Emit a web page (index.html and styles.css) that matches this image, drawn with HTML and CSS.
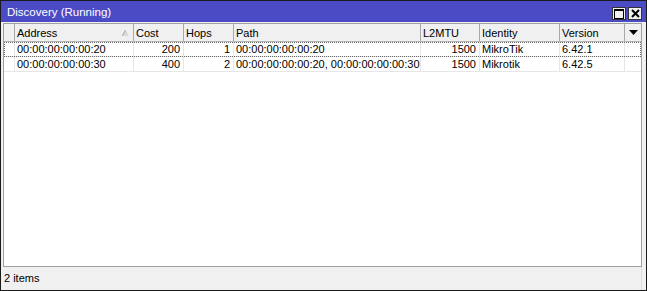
FILE: index.html
```html
<!DOCTYPE html>
<html>
<head>
<meta charset="utf-8">
<link rel="stylesheet" href="styles.css">
</head>
<body>
<div class="window">
  <div class="titlebar">
    <span class="title">Discovery (Running)</span>
    <div class="tbtns">
      <div class="tbtn"><svg width="10" height="10" viewBox="0 0 10 10"><rect x="0.5" y="0.5" width="9" height="9" fill="none" stroke="#000"/><rect x="0" y="0" width="10" height="2" fill="#000"/></svg></div>
      <div class="tbtn"><svg width="9" height="9" viewBox="0 0 9 9"><path d="M1 1 L8 8 M8 1 L1 8" stroke="#000" stroke-width="2"/></svg></div>
    </div>
  </div>
  <div class="content">
    <div class="list">
      <div class="row head">
        <div class="c"></div>
        <div class="c">Address<svg class="sort" width="7" height="6" viewBox="0 0 7 6"><path d="M3.5 0 L7 6 L0 6 Z" fill="#d8d8d8"/><path d="M3.5 0 L0 6" stroke="#a8a8a8" stroke-width="1"/></svg></div>
        <div class="c">Cost</div>
        <div class="c">Hops</div>
        <div class="c">Path</div>
        <div class="c">L2MTU</div>
        <div class="c">Identity</div>
        <div class="c">Version</div>
        <div class="c dd"><svg width="9" height="5" viewBox="0 0 9 5"><path d="M0 0 L9 0 L4.5 5 Z" fill="#000"/></svg></div>
      </div>
      <div class="row data focus">
        <div class="c"></div>
        <div class="c">00:00:00:00:00:20</div>
        <div class="c r">200</div>
        <div class="c r">1</div>
        <div class="c">00:00:00:00:00:20</div>
        <div class="c r">1500</div>
        <div class="c">MikroTik</div>
        <div class="c">6.42.1</div>
        <div class="c"></div>
      </div>
      <div class="row data">
        <div class="c"></div>
        <div class="c">00:00:00:00:00:30</div>
        <div class="c r">400</div>
        <div class="c r">2</div>
        <div class="c">00:00:00:00:00:20, 00:00:00:00:00:30</div>
        <div class="c r">1500</div>
        <div class="c">Mikrotik</div>
        <div class="c">6.42.5</div>
        <div class="c"></div>
      </div>
    </div>
  </div>
  <div class="status">2 items</div>
</div>
</body>
</html>
```
FILE: styles.css
```css
* { box-sizing: border-box; }
html, body { margin: 0; padding: 0; background: #fff; }
body { font-family: "Liberation Sans", Arial, sans-serif; font-size: 11px; color: #000; }
.window {
  width: 647px; height: 291px;
  border: 1px solid #1a1a1a;
  background: #f0f0f0;
  display: flex; flex-direction: column;
}
.titlebar {
  height: 21px; background: #4b4bc6; color: #fff;
  display: flex; align-items: center;
  padding: 0 4px 0 6px;
}
.title { font-size: 11.5px; }
.tbtns { margin-left: auto; display: flex; gap: 2px; margin-top: 4px; }
.tbtn {
  width: 14px; height: 13px; background: #f0f0f0;
  border: 1px solid #333;
  display: flex; align-items: center; justify-content: center;
}
.content { flex: 1; padding: 1px 4px 0 2px; display: flex; min-height: 0; }
.list {
  flex: 1; background: #fff;
  border: 1px solid #a0a0a0;
  overflow: hidden;
}
.row {
  display: grid;
  grid-template-columns: 10px 119px 50px 50px 187px 59px 80px 65px 17px;
}
.c { padding: 0 2px; white-space: nowrap; overflow: hidden; display: flex; align-items: center; }
.r { justify-content: flex-end; padding-right: 3px; }
.head { height: 18px; background: #f0f0f0; border-bottom: 1px solid #b4b4b4; }
.head .c + .c { border-left: 1px solid #a8a8a8; }
.sort { margin-left: auto; margin-right: 2px; }
.dd { justify-content: center; padding: 0; }
.data { height: 15px; border-bottom: 1px solid #e6e6e6; }
.data .c + .c { border-left: 1px solid #e6e6e6; }
.focus { outline: 1px dotted #6a6a6a; outline-offset: -1px; }
.status { height: 23px; line-height: 22px; padding-left: 3px; background: #f0f0f0; border-right: 1px solid #dcdcdc; margin-right: 4px; }
```
